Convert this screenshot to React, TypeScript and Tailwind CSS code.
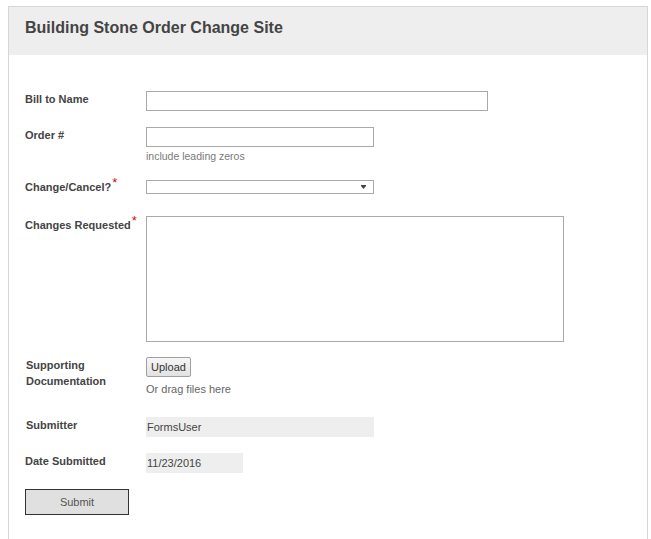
import React from "react";

const labelCls =
  "w-[121px] shrink-0 text-[11px] leading-[14px] font-bold text-[#444]";

function Req() {
  return (
    <span className="relative top-[-4px] ml-[1px] text-[13px] leading-[0] font-normal text-[#cc1111]">
      *
    </span>
  );
}

export default function App() {
  return (
    <div className="min-h-[539px] bg-white pt-[6px] pl-[8px] font-['Liberation_Sans',Arial,sans-serif]">
      <div className="w-[640px] min-h-[533px] border-x border-t border-[#d6d6d6]">
        <div className="h-[48px] bg-[#eeeeee] pl-[16px] pt-[12px]">
          <h1 className="text-[16px] leading-[18px] font-bold text-[#444]">
            Building Stone Order Change Site
          </h1>
        </div>

        <div className="pl-[16px] pt-[36px] pb-[20px]">
          {/* Bill to Name */}
          <div className="flex">
            <div className={`${labelCls} pt-[1px]`}>Bill to Name</div>
            <input
              className="w-[342px] h-[20px] border border-[#a9a9a9] bg-white outline-none"
              aria-label="Bill to Name"
            />
          </div>

          {/* Order # */}
          <div className="flex mt-[16px]">
            <div className={`${labelCls} pt-[1px]`}>Order #</div>
            <div className="flex flex-col">
              <input
                className="w-[228px] h-[20px] border border-[#a9a9a9] bg-white outline-none"
                aria-label="Order #"
              />
              <div className="mt-[3px] text-[10.5px] leading-[13px] text-[#7a7a7a]">
                include leading zeros
              </div>
            </div>
          </div>

          {/* Change/Cancel */}
          <div className="flex mt-[17px]">
            <div className={`${labelCls}`}>
              Change/Cancel?
              <Req />
            </div>
            <div className="relative w-[228px] h-[14px] border border-[#a9a9a9] bg-white">
              <svg
                className="absolute right-[7px] top-[4px]"
                width="5"
                height="4"
                viewBox="0 0 5 4"
              >
                <rect x="0" y="0" width="5" height="1" fill="#444" />
                <polygon points="0,1 5,1 2.5,4" fill="#444" />
              </svg>
            </div>
          </div>

          {/* Changes Requested */}
          <div className="flex mt-[22px]">
            <div className={`${labelCls} pt-[2px]`}>
              Changes Requested
              <Req />
            </div>
            <textarea
              className="w-[418px] h-[126px] border border-[#a9a9a9] bg-white outline-none resize-none"
              aria-label="Changes Requested"
            />
          </div>

          {/* Supporting Documentation */}
          <div className="flex mt-[15px]">
            <div className="w-[121px] shrink-0 pl-[1px] text-[11px] leading-[16px] font-bold text-[#444]">
              Supporting
              <br />
              Documentation
            </div>
            <div className="flex flex-col items-start">
              <button className="w-[45px] h-[20px] rounded-[2px] border border-[#a0a0a0] bg-gradient-to-b from-[#f6f6f6] to-[#e2e2e2] text-[11px] leading-[18px] text-[#333]">
                Upload
              </button>
              <div className="mt-[5px] text-[11px] leading-[14px] text-[#666]">
                Or drag files here
              </div>
            </div>
          </div>

          {/* Submitter */}
          <div className="flex mt-[21px]">
            <div className={`${labelCls} pt-[1px] pl-[1px]`}>Submitter</div>
            <div className="w-[228px] h-[20px] bg-[#eeeeee] pl-[1px] text-[11px] leading-[20px] text-[#444]">
              FormsUser
            </div>
          </div>

          {/* Date Submitted */}
          <div className="flex mt-[16px]">
            <div className={`${labelCls} pt-[1px]`}>Date Submitted</div>
            <div className="w-[97px] h-[20px] bg-[#eeeeee] pl-[1px] text-[11px] leading-[20px] text-[#444]">
              11/23/2016
            </div>
          </div>

          {/* Submit */}
          <button className="mt-[16px] w-[104px] h-[26px] border border-[#333] bg-[#e0e0e0] text-[11px] text-[#555]">
            Submit
          </button>
        </div>
      </div>
    </div>
  );
}
